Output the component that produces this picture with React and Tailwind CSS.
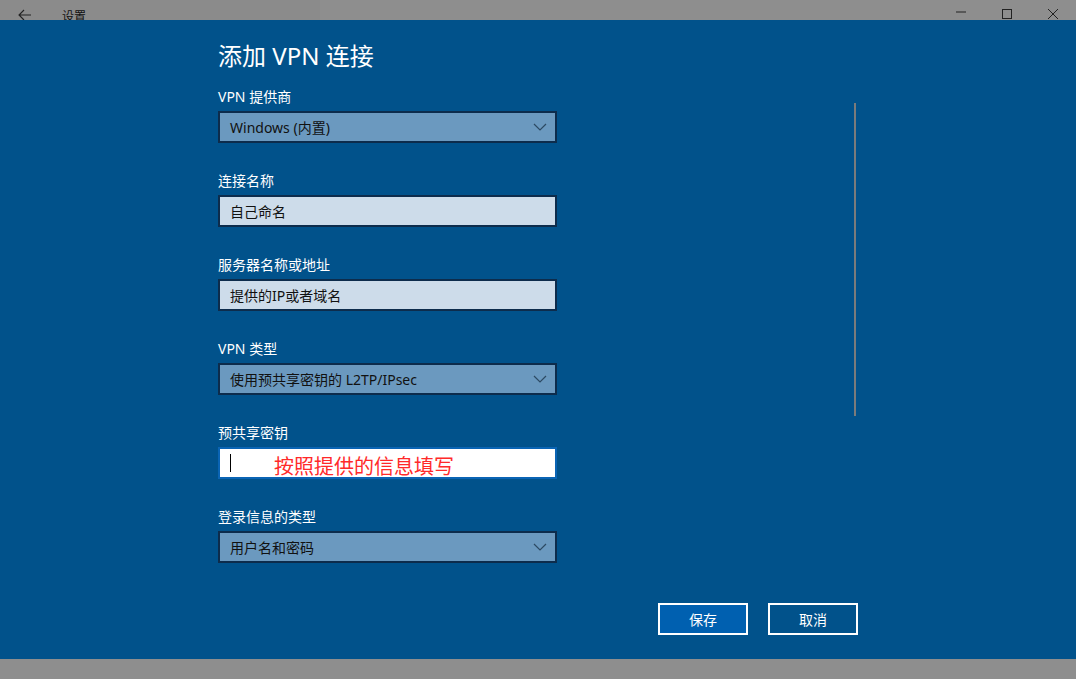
import React from 'react';

const font = { fontFamily: '"Noto Sans", "Noto Sans CJK SC", sans-serif' };

function Chevron() {
  return (
    <svg width="14" height="8" viewBox="0 0 14 8" className="shrink-0">
      <path d="M1 1 L7 7 L13 1" fill="none" stroke="#2d4a63" strokeWidth="1.2" />
    </svg>
  );
}

function Select({ value }) {
  return (
    <div className="w-[339px] h-[32px] border-2 border-[#0d2c4c] bg-[#6b99bf] flex items-center justify-between pl-[10px] pr-[8px]">
      <span className="text-[14px] text-[#111]">{value}</span>
      <Chevron />
    </div>
  );
}

function TextBox({ value }) {
  return (
    <div className="w-[339px] h-[32px] border-2 border-[#0d2c4c] bg-[#cddcea] flex items-center pl-[10px]">
      <span className="text-[14px] text-[#111]">{value}</span>
    </div>
  );
}

function Field({ label, children }) {
  return (
    <div className="flex flex-col">
      <div className="text-[14px] leading-5 text-white">{label}</div>
      <div className="mt-1">{children}</div>
    </div>
  );
}

export default function App() {
  return (
    <div className="w-[1076px] h-[679px] flex flex-col overflow-hidden" style={font}>
      {/* title bar */}
      <div className="h-[20px] flex bg-[#8e8e8e] relative">
        <div className="w-[320px] h-full bg-[#8b8b8b] flex items-end">
          <svg width="16" height="12" viewBox="0 0 16 12" className="ml-[17px] mb-[-1px]">
            <path d="M14 6 H2 M7 1 L2 6 L7 11" fill="none" stroke="#222" strokeWidth="1.1" />
          </svg>
          <span className="ml-[29px] text-[12px] leading-none text-[#111] mb-[-3px]">设置</span>
        </div>
        <div className="flex-1" />
        <div className="flex items-end">
          <svg width="12" height="12" viewBox="0 0 12 12" className="mr-[34px] mb-[2px]">
            <path d="M1 6 H11" stroke="#222" strokeWidth="1" />
          </svg>
          <svg width="12" height="12" viewBox="0 0 12 12" className="mr-[34px]">
            <rect x="1.5" y="1.5" width="9" height="9" fill="none" stroke="#222" strokeWidth="1" />
          </svg>
          <svg width="12" height="12" viewBox="0 0 12 12" className="mr-[17px]">
            <path d="M1 1 L11 11 M11 1 L1 11" stroke="#222" strokeWidth="1" />
          </svg>
        </div>
      </div>

      {/* main */}
      <div className="flex-1 bg-[#01528b] relative">
        <div className="pl-[218px] pt-[20px]">
          <h1 className="text-[24px] leading-8 text-white">添加 VPN 连接</h1>
          <div className="mt-[15px] flex flex-col gap-[28px]">
            <Field label="VPN 提供商">
              <Select value="Windows (内置)" />
            </Field>
            <Field label="连接名称">
              <TextBox value="自己命名" />
            </Field>
            <Field label="服务器名称或地址">
              <TextBox value="提供的IP或者域名" />
            </Field>
            <Field label="VPN 类型">
              <Select value="使用预共享密钥的 L2TP/IPsec" />
            </Field>
            <Field label="预共享密钥">
              <div className="w-[339px] h-[32px] border-2 border-[#0a64b4] bg-white flex items-center pl-[10px] relative">
                <div className="w-px h-[18px] bg-black" />
                <span className="absolute left-[54px] top-[8px] text-[20px] leading-none text-[#ff2a2a]">按照提供的信息填写</span>
              </div>
            </Field>
            <Field label="登录信息的类型">
              <Select value="用户名和密码" />
            </Field>
          </div>
          <div className="mt-[40px] ml-[440px] flex gap-[20px]">
            <button className="w-[90px] h-[32px] border-2 border-white bg-[#0060b0] text-white text-[14px]">保存</button>
            <button className="w-[90px] h-[32px] border-2 border-white text-white text-[14px]">取消</button>
          </div>
        </div>
        <div className="absolute left-[854px] top-[83px] w-[2px] h-[313px] bg-[#7b7b7b]" />
      </div>

      {/* bottom bar */}
      <div className="h-[20px] bg-[#8e8e8e]" />
    </div>
  );
}
